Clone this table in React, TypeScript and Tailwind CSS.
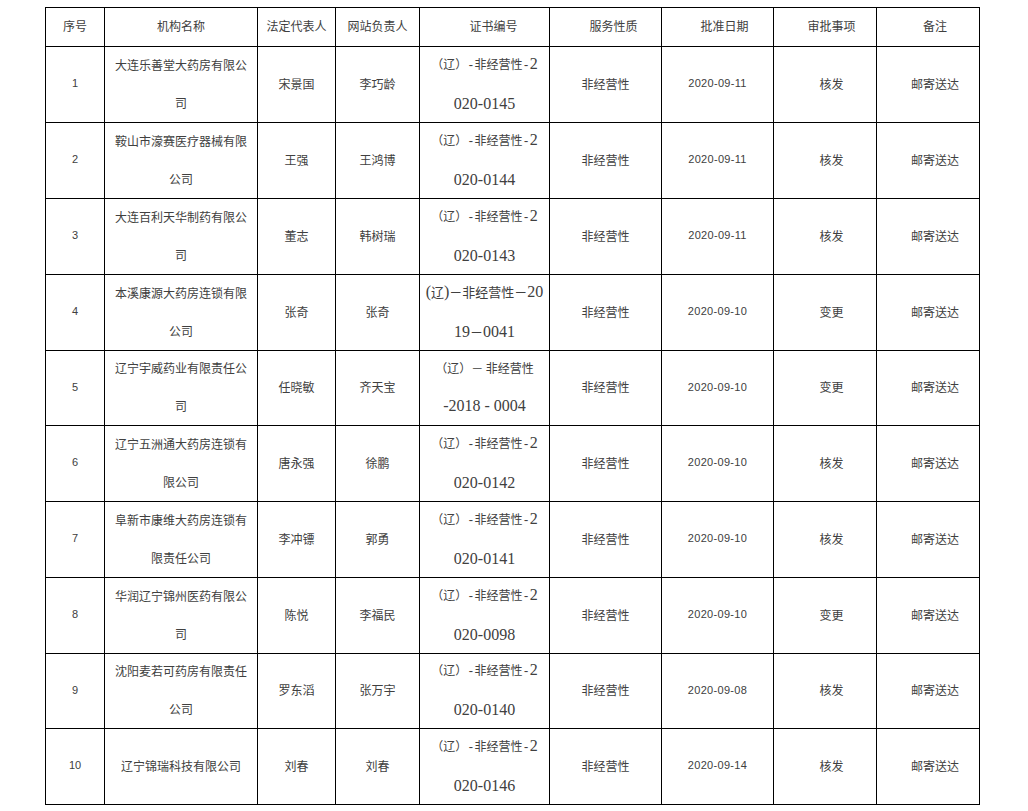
import React from "react";

type Row = {
  no: string;
  name: string[];
  legal: string;
  web: string;
  cert: React.ReactNode;
  date: string;
  item: string;
  h: string;
};

const cjk = { fontFamily: '"Noto Sans CJK SC", sans-serif' };
const serif = { fontFamily: '"Liberation Serif", "Noto Sans CJK SC", serif' };
const mono = { fontFamily: '"Liberation Mono", monospace' };

function CertStd({ tail }: { tail: string }) {
  return (
    <div className="flex flex-col items-center leading-[38px]">
      <div className="whitespace-nowrap">
        <span className="text-[12px]">（辽）</span>
        <span className="text-[12px]" style={mono}>-</span>
        <span className="text-[12px]">非经营性</span>
        <span className="text-[12px]" style={mono}>-</span>
        <span className="text-[16px]" style={serif}>2</span>
      </div>
      <div className="text-[16px] whitespace-nowrap" style={serif}>
        {tail}
      </div>
    </div>
  );
}

const cert4 = (
  <div className="flex flex-col items-center leading-[38px]">
    <div className="whitespace-nowrap">
      <span className="text-[16px]" style={serif}>(</span>
      <span className="text-[13px]">辽</span>
      <span className="text-[16px]" style={serif}>)</span>
      <span className="text-[13px]">－非经营性－</span>
      <span className="text-[16px]" style={serif}>20</span>
    </div>
    <div className="whitespace-nowrap text-[16px]">
      <span style={serif}>19</span>
      <span className="text-[13px]">－</span>
      <span style={serif}>0041</span>
    </div>
  </div>
);

const cert5 = (
  <div className="flex flex-col items-center leading-[38px]">
    <div className="whitespace-nowrap text-[12px]">（辽）－ 非经营性</div>
    <div className="whitespace-nowrap text-[16px]" style={serif}>
      -2018 - 0004
    </div>
  </div>
);

const rows: Row[] = [
  { no: "1", name: ["大连乐善堂大药房有限公", "司"], legal: "宋景国", web: "李巧龄", cert: <CertStd tail="020-0145" />, date: "2020-09-11", item: "核发", h: "h-[76px]" },
  { no: "2", name: ["鞍山市濠赛医疗器械有限", "公司"], legal: "王强", web: "王鸿博", cert: <CertStd tail="020-0144" />, date: "2020-09-11", item: "核发", h: "h-[76px]" },
  { no: "3", name: ["大连百利天华制药有限公", "司"], legal: "董志", web: "韩树瑞", cert: <CertStd tail="020-0143" />, date: "2020-09-11", item: "核发", h: "h-[76px]" },
  { no: "4", name: ["本溪康源大药房连锁有限", "公司"], legal: "张奇", web: "张奇", cert: cert4, date: "2020-09-10", item: "变更", h: "h-[76px]" },
  { no: "5", name: ["辽宁宇威药业有限责任公", "司"], legal: "任晓敏", web: "齐天宝", cert: cert5, date: "2020-09-10", item: "变更", h: "h-[75px]" },
  { no: "6", name: ["辽宁五洲通大药房连锁有", "限公司"], legal: "唐永强", web: "徐鹏", cert: <CertStd tail="020-0142" />, date: "2020-09-10", item: "核发", h: "h-[76px]" },
  { no: "7", name: ["阜新市康维大药房连锁有", "限责任公司"], legal: "李冲镖", web: "郭勇", cert: <CertStd tail="020-0141" />, date: "2020-09-10", item: "核发", h: "h-[76px]" },
  { no: "8", name: ["华润辽宁锦州医药有限公", "司"], legal: "陈悦", web: "李福民", cert: <CertStd tail="020-0098" />, date: "2020-09-10", item: "变更", h: "h-[76px]" },
  { no: "9", name: ["沈阳麦若可药房有限责任", "公司"], legal: "罗东滔", web: "张万宇", cert: <CertStd tail="020-0140" />, date: "2020-09-08", item: "核发", h: "h-[75px]" },
  { no: "10", name: ["辽宁锦瑞科技有限公司"], legal: "刘春", web: "刘春", cert: <CertStd tail="020-0146" />, date: "2020-09-14", item: "核发", h: "h-[76px]" },
];

const cell = "border-r border-b border-black flex items-center justify-center text-center pb-[2px]";
const num = { fontFamily: '"Liberation Sans", sans-serif' };

export default function App() {
  return (
    <div className="min-h-[811px] w-[1028px] bg-white pt-[7px] pl-[45px] text-[#404040]" style={cjk}>
      <div className="grid w-[935px] grid-cols-[59px_153px_78px_84px_130px_112px_112px_103px_103px] border-l border-t border-black text-[12px]">
        <div className={`${cell} h-[39px]`}>序号</div>
        <div className={`${cell} h-[39px]`}>机构名称</div>
        <div className={`${cell} h-[39px]`}>法定代表人</div>
        <div className={`${cell} h-[39px]`}>网站负责人</div>
        <div className={`${cell} h-[39px] pl-[18px]`}>证书编号</div>
        <div className={`${cell} h-[39px] pl-[16px]`}>服务性质</div>
        <div className={`${cell} h-[39px] pl-[14px]`}>批准日期</div>
        <div className={`${cell} h-[39px] pl-[13px]`}>审批事项</div>
        <div className={`${cell} h-[39px] pl-[14px]`}>备注</div>
        {rows.map((r) => (
          <React.Fragment key={r.no}>
            <div className={`${cell} ${r.h} text-[11px]`} style={num}>{r.no}</div>
            <div className={`${cell} ${r.h} flex-col leading-[38px]`}>
              {r.name.map((l, i) => (
                <div key={i} className="whitespace-nowrap">{l}</div>
              ))}
            </div>
            <div className={`${cell} ${r.h}`}>{r.legal}</div>
            <div className={`${cell} ${r.h}`}>{r.web}</div>
            <div className={`${cell} ${r.h}`}>{r.cert}</div>
            <div className={`${cell} ${r.h}`}>非经营性</div>
            <div className={`${cell} ${r.h} text-[11px] tracking-[0.3px]`} style={num}>{r.date}</div>
            <div className={`${cell} ${r.h} pl-[13px]`}>{r.item}</div>
            <div className={`${cell} ${r.h} pl-[14px]`}>邮寄送达</div>
          </React.Fragment>
        ))}
      </div>
    </div>
  );
}
